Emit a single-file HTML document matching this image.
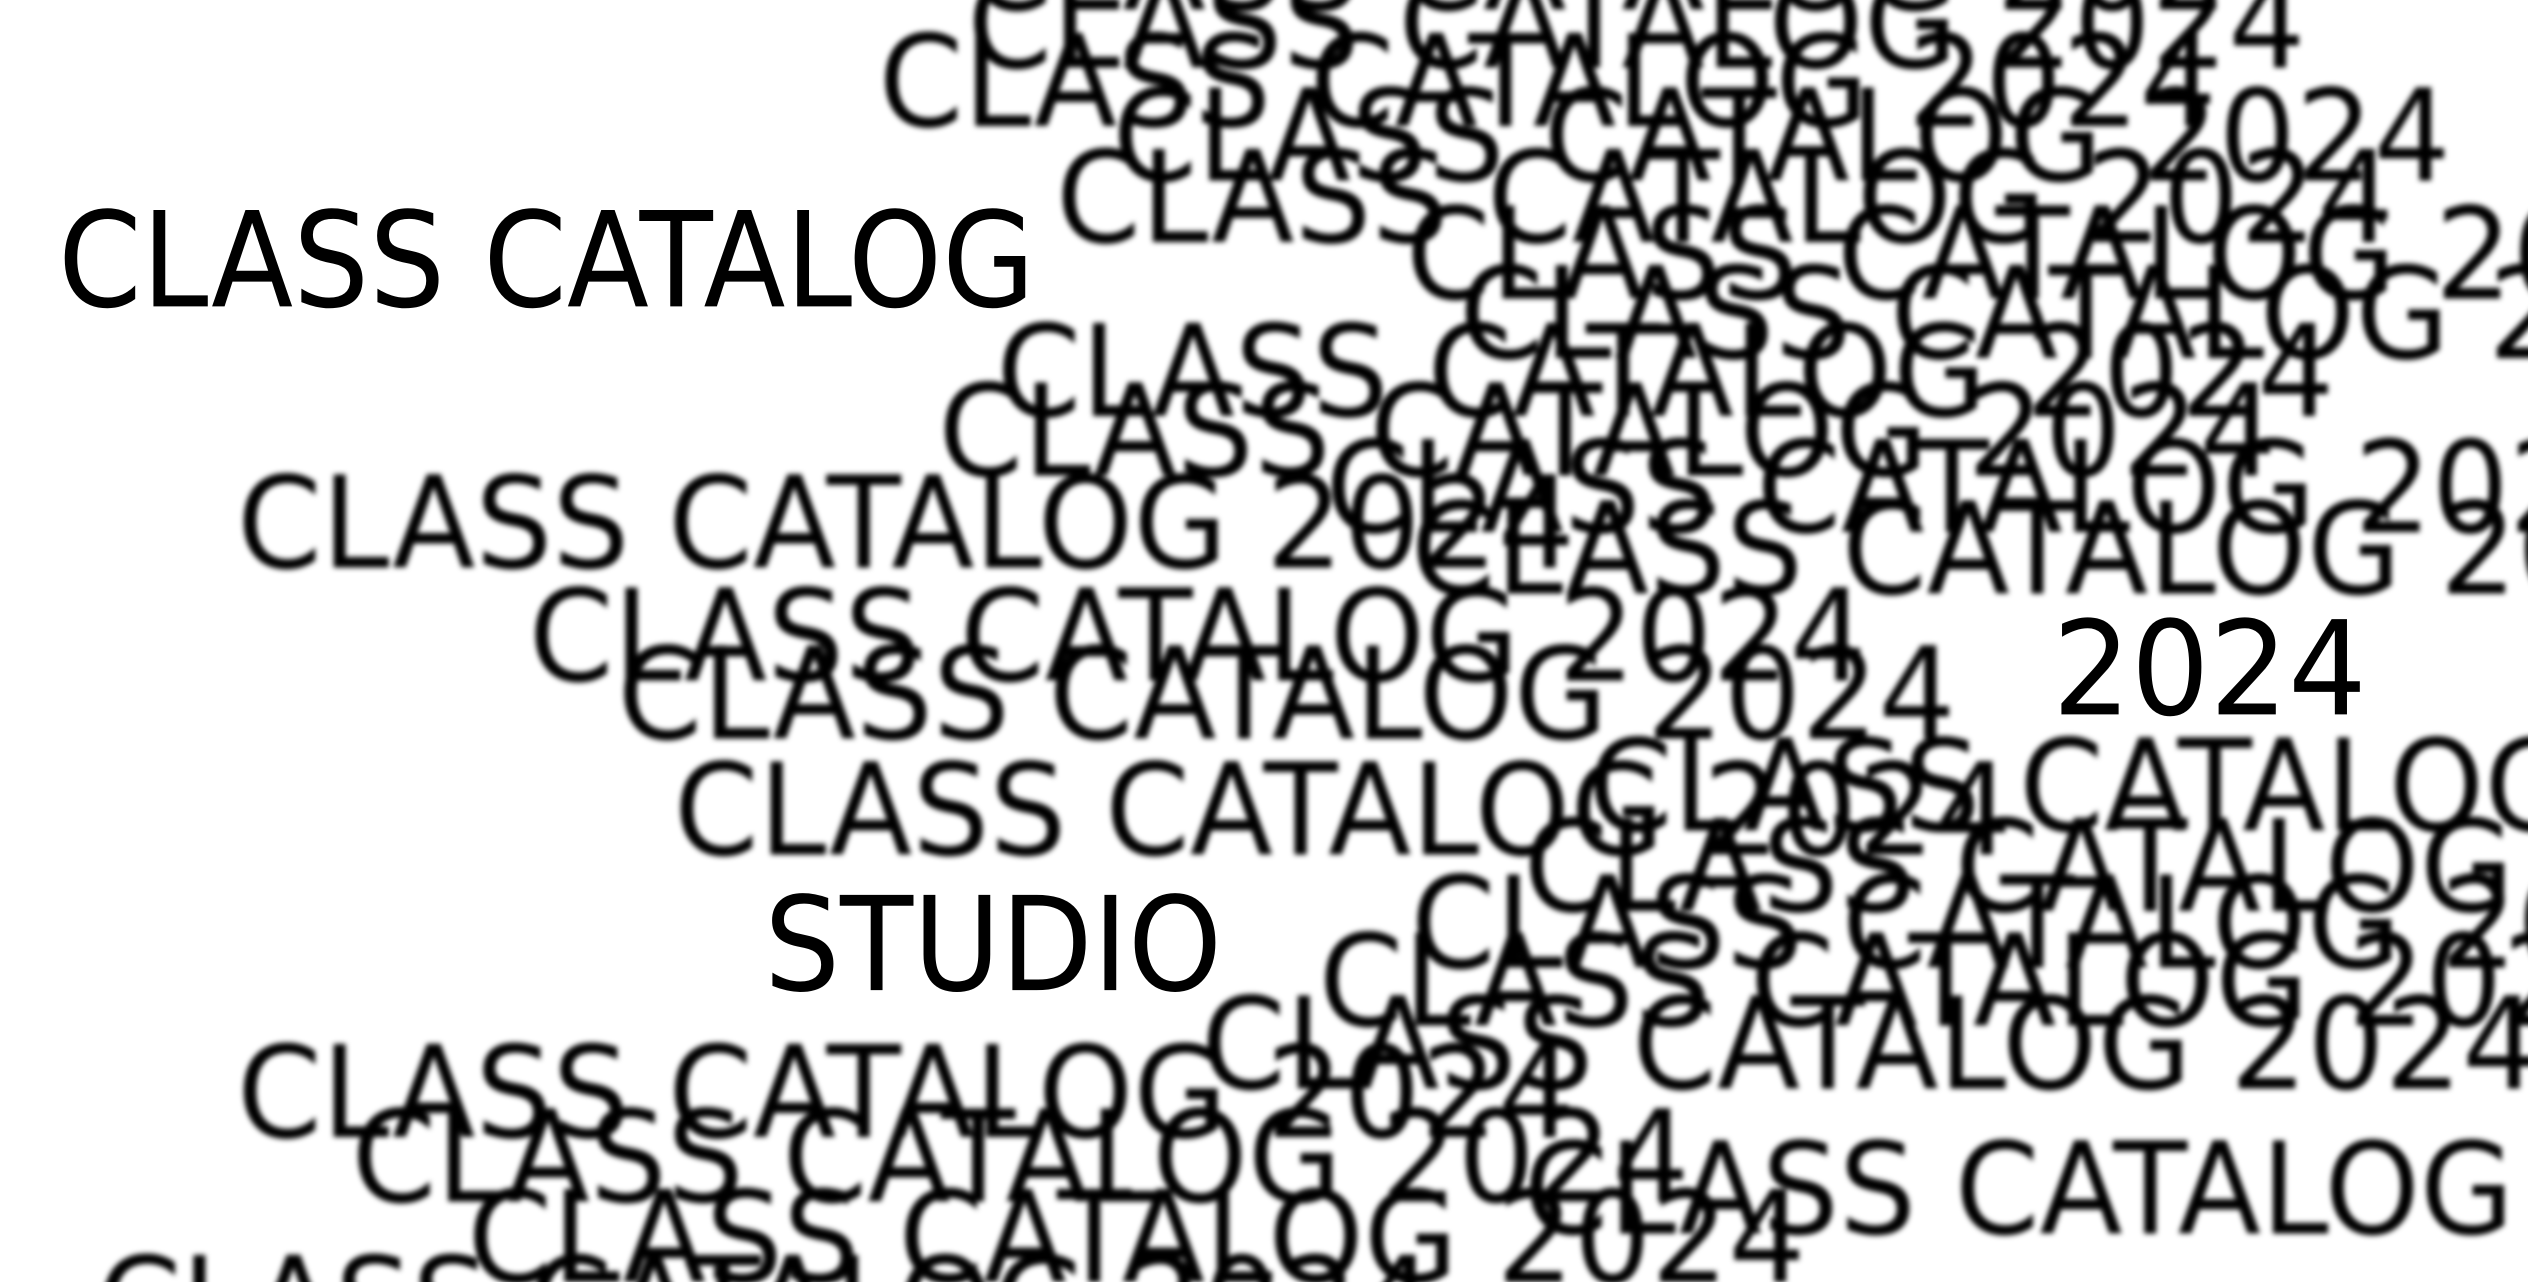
<!DOCTYPE html>
<html><head><meta charset="utf-8"><style>
html,body{margin:0;padding:0;background:#fff;width:2528px;height:1282px;overflow:hidden}
svg{display:block;overflow:hidden}
text{font-family:"DejaVu Sans","Liberation Sans",sans-serif;fill:#000}
</style></head><body>
<svg width="2528" height="1282" viewBox="0 0 1568 795" preserveAspectRatio="none" overflow="hidden">
<defs><filter id="b" x="-5%" y="-50%" width="110%" height="200%"><feGaussianBlur stdDeviation="1.6"/></filter></defs>
<rect width="1568" height="795" fill="#fff"/>
<g filter="url(#b)" font-size="79">
<text x="600" y="6" textLength="830" lengthAdjust="spacingAndGlyphs">CLASS CATALOG 2024</text>
<text x="600" y="42" textLength="830" lengthAdjust="spacingAndGlyphs">CLASS CATALOG 2024</text>
<text x="545" y="78" textLength="830" lengthAdjust="spacingAndGlyphs">CLASS CATALOG 2024</text>
<text x="690" y="112" textLength="830" lengthAdjust="spacingAndGlyphs">CLASS CATALOG 2024</text>
<text x="655" y="150" textLength="830" lengthAdjust="spacingAndGlyphs">CLASS CATALOG 2024</text>
<text x="872" y="185" textLength="830" lengthAdjust="spacingAndGlyphs">CLASS CATALOG 2024</text>
<text x="905" y="222" textLength="830" lengthAdjust="spacingAndGlyphs">CLASS CATALOG 2024</text>
<text x="618" y="258" textLength="830" lengthAdjust="spacingAndGlyphs">CLASS CATALOG 2024</text>
<text x="582" y="295" textLength="830" lengthAdjust="spacingAndGlyphs">CLASS CATALOG 2024</text>
<text x="822" y="330" textLength="830" lengthAdjust="spacingAndGlyphs">CLASS CATALOG 2024</text>
<text x="147" y="352" textLength="830" lengthAdjust="spacingAndGlyphs">CLASS CATALOG 2024</text>
<text x="875" y="368" textLength="830" lengthAdjust="spacingAndGlyphs">CLASS CATALOG 2024</text>
<text x="328" y="422" textLength="830" lengthAdjust="spacingAndGlyphs">CLASS CATALOG 2024</text>
<text x="383" y="458" textLength="830" lengthAdjust="spacingAndGlyphs">CLASS CATALOG 2024</text>
<text x="985" y="515" textLength="830" lengthAdjust="spacingAndGlyphs">CLASS CATALOG 2024</text>
<text x="418" y="530" textLength="830" lengthAdjust="spacingAndGlyphs">CLASS CATALOG 2024</text>
<text x="945" y="565" textLength="830" lengthAdjust="spacingAndGlyphs">CLASS CATALOG 2024</text>
<text x="875" y="600" textLength="830" lengthAdjust="spacingAndGlyphs">CLASS CATALOG 2024</text>
<text x="818" y="636" textLength="830" lengthAdjust="spacingAndGlyphs">CLASS CATALOG 2024</text>
<text x="745" y="675" textLength="830" lengthAdjust="spacingAndGlyphs">CLASS CATALOG 2024</text>
<text x="147" y="705" textLength="830" lengthAdjust="spacingAndGlyphs">CLASS CATALOG 2024</text>
<text x="218" y="745" textLength="830" lengthAdjust="spacingAndGlyphs">CLASS CATALOG 2024</text>
<text x="945" y="765" textLength="830" lengthAdjust="spacingAndGlyphs">CLASS CATALOG 2024</text>
<text x="290" y="795" textLength="830" lengthAdjust="spacingAndGlyphs">CLASS CATALOG 2024</text>
<text x="60" y="836" textLength="830" lengthAdjust="spacingAndGlyphs">CLASS CATALOG 2024</text>
</g>
<text x="36" y="190" font-size="82" textLength="606" lengthAdjust="spacingAndGlyphs">CLASS CATALOG</text>
<text x="1273" y="443" font-size="81" textLength="195" lengthAdjust="spacingAndGlyphs">2024</text>
<text x="474" y="614" font-size="81" textLength="284" lengthAdjust="spacingAndGlyphs">STUDIO</text>
</svg>
</body></html>
